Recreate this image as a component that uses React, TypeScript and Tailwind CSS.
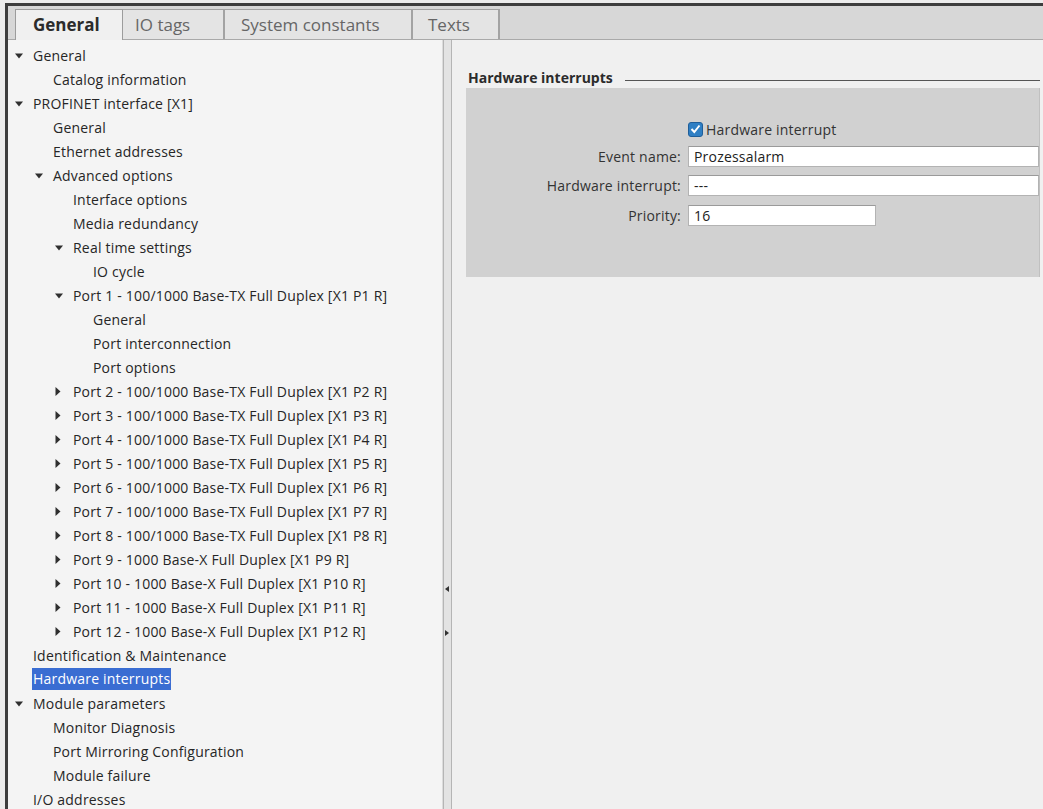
import React from "react";

type TreeRow = {
    label: string;
    level: number;
    arrow?: "down" | "right";
    selected?: boolean;
};

const rows: TreeRow[] = [
    { label: "General", level: 0, arrow: "down" },
    { label: "Catalog information", level: 1 },
    { label: "PROFINET interface [X1]", level: 0, arrow: "down" },
    { label: "General", level: 1 },
    { label: "Ethernet addresses", level: 1 },
    { label: "Advanced options", level: 1, arrow: "down" },
    { label: "Interface options", level: 2 },
    { label: "Media redundancy", level: 2 },
    { label: "Real time settings", level: 2, arrow: "down" },
    { label: "IO cycle", level: 3 },
    { label: "Port 1 - 100/1000 Base-TX Full Duplex [X1 P1 R]", level: 2, arrow: "down" },
    { label: "General", level: 3 },
    { label: "Port interconnection", level: 3 },
    { label: "Port options", level: 3 },
    { label: "Port 2 - 100/1000 Base-TX Full Duplex [X1 P2 R]", level: 2, arrow: "right" },
    { label: "Port 3 - 100/1000 Base-TX Full Duplex [X1 P3 R]", level: 2, arrow: "right" },
    { label: "Port 4 - 100/1000 Base-TX Full Duplex [X1 P4 R]", level: 2, arrow: "right" },
    { label: "Port 5 - 100/1000 Base-TX Full Duplex [X1 P5 R]", level: 2, arrow: "right" },
    { label: "Port 6 - 100/1000 Base-TX Full Duplex [X1 P6 R]", level: 2, arrow: "right" },
    { label: "Port 7 - 100/1000 Base-TX Full Duplex [X1 P7 R]", level: 2, arrow: "right" },
    { label: "Port 8 - 100/1000 Base-TX Full Duplex [X1 P8 R]", level: 2, arrow: "right" },
    { label: "Port 9 - 1000 Base-X Full Duplex [X1 P9 R]", level: 2, arrow: "right" },
    { label: "Port 10 - 1000 Base-X Full Duplex [X1 P10 R]", level: 2, arrow: "right" },
    { label: "Port 11 - 1000 Base-X Full Duplex [X1 P11 R]", level: 2, arrow: "right" },
    { label: "Port 12 - 1000 Base-X Full Duplex [X1 P12 R]", level: 2, arrow: "right" },
    { label: "Identification & Maintenance", level: 0 },
    { label: "Hardware interrupts", level: 0, selected: true },
    { label: "Module parameters", level: 0, arrow: "down" },
    { label: "Monitor Diagnosis", level: 1 },
    { label: "Port Mirroring Configuration", level: 1 },
    { label: "Module failure", level: 1 },
    { label: "I/O addresses", level: 0 },
];

const indent = ["pl-[7px]", "pl-[27px]", "pl-[47px]", "pl-[67px]"];

function Arrow({ dir }: { dir?: "down" | "right" }) {
    if (dir === "down") {
        return (
            <svg width="8" height="6" viewBox="0 0 8 6" className="mt-[1px]">
                <path d="M0 0.5 L8 0.5 L4 5.5 Z" fill="#2f2f2f" />
            </svg>
        );
    }
    if (dir === "right") {
        return (
            <svg width="6" height="9" viewBox="0 0 6 9">
                <path d="M0.5 0 L5.5 4.5 L0.5 9 Z" fill="#2f2f2f" />
            </svg>
        );
    }
    return null;
}

function TreeItem({ label, level, arrow, selected }: TreeRow) {
    return (
        <div className={`h-[24px] flex items-center whitespace-nowrap ${indent[level]}`}>
            <div className="w-[18px] shrink-0 flex items-center">
                <Arrow dir={arrow} />
            </div>
            <span
                className={
                    selected
                        ? "bg-[#3a6dd2] text-white px-[1px] -ml-[1px] leading-[22px]"
                        : "text-[#262626]"
                }
            >
                {label}
            </span>
        </div>
    );
}

function Field({ label, value, short }: { label: string; value: string; short?: boolean }) {
    return (
        <div className="flex items-center h-[21px]">
            <div className="w-[222px] shrink-0 text-right pr-[7px] text-[#333] whitespace-nowrap">{label}</div>
            <div
                className={`h-[21px] bg-white border border-[#b3b3b3] border-t-[#9a9a9a] flex items-center pl-[5px] text-[#222] ${
                    short ? "w-[188px]" : "flex-1"
                }`}
            >
                {value}
            </div>
        </div>
    );
}

export default function App() {
    return (
        <div
            className="w-[1043px] h-[809px] overflow-hidden bg-[#ececec] pt-[3px] pl-[5px] text-[14px] tracking-[0.2px]"
            style={{ fontFamily: '"Open Sans", "Noto Sans", sans-serif' }}
        >
            <div className="h-full flex flex-col border-l-[3px] border-t-[3px] border-[#3d3d3d]">
                {/* tab strip */}
                <div className="h-[34px] shrink-0 bg-[#d7d7d7] pt-[4px] pl-[7px] flex items-end border-b border-[#a9a9a9] tracking-normal">
                    <div className="w-[108px] h-[31px] -mb-[1px] bg-[#f0f0f0] border border-b-0 border-[#9c9c9c] flex items-center pl-[17px] font-bold text-[17px] text-[#2b2b2b]">
                        General
                    </div>
                    <div className="w-[102px] h-[30px] bg-[#e4e4e4] border-r-2 border-t border-[#a3a3a3] flex items-center pl-[12px] text-[17px] text-[#666]">
                        IO tags
                    </div>
                    <div className="w-[188px] h-[30px] bg-[#e4e4e4] border-r-2 border-t border-[#a3a3a3] flex items-center pl-[16px] text-[17px] text-[#666]">
                        System constants
                    </div>
                    <div className="w-[87px] h-[30px] bg-[#e4e4e4] border-r-2 border-t border-[#a3a3a3] flex items-center pl-[15px] text-[17px] text-[#666]">
                        Texts
                    </div>
                </div>

                {/* body */}
                <div className="flex-1 flex min-h-0">
                    {/* tree */}
                    <div className="w-[435px] shrink-0 bg-[#f4f4f4] pt-[3px] border-r border-[#dcdcdc] overflow-hidden">
                        {rows.map((r, i) => (
                            <TreeItem key={i} {...r} />
                        ))}
                    </div>

                    {/* splitter */}
                    <div className="w-[9px] shrink-0 bg-[#e3e3e3] border-x border-[#b5b5b5] relative">
                        <div className="absolute left-[1px] top-[546px]">
                            <svg width="4" height="6" viewBox="0 0 4 6">
                                <path d="M4 0 L0 3 L4 6 Z" fill="#333" />
                            </svg>
                        </div>
                        <div className="absolute left-[1px] top-[590px]">
                            <svg width="4" height="6" viewBox="0 0 4 6">
                                <path d="M0 0 L4 3 L0 6 Z" fill="#333" />
                            </svg>
                        </div>
                    </div>

                    {/* right panel */}
                    <div className="flex-1 bg-[#f0f0f0] pl-[14px] pr-[3px]">
                        <div className="mt-[28px] h-[18px] flex items-center gap-[12px] pl-[2px]">
                            <span className="font-bold text-[#2b2b2b] whitespace-nowrap tracking-normal">Hardware interrupts</span>
                            <div className="flex-1 h-[1px] bg-[#555] mt-[6px]" />
                        </div>
                        <div className="mt-[2px] h-[189px] bg-[#d1d1d1] border-r border-[#c0c0c0] pt-[32px] flex flex-col gap-[8px]">
                            <div className="flex items-center h-[18px]">
                                <div className="w-[222px] shrink-0" />
                                <div className="w-[15px] h-[15px] rounded-[3px] bg-[#2f7fc4] border border-[#1f5e99] flex items-center justify-center">
                                    <svg width="11" height="10" viewBox="0 0 11 10">
                                        <path d="M1.5 5 L4.3 8 L9.5 1.5" stroke="white" strokeWidth="2" fill="none" />
                                    </svg>
                                </div>
                                <span className="ml-[3px] text-[#333]">Hardware interrupt</span>
                            </div>
                            <Field label="Event name:" value="Prozessalarm" />
                            <Field label="Hardware interrupt:" value="---" />
                            <div className="mt-[1px]">
                                <Field label="Priority:" value="16" short />
                            </div>
                        </div>
                    </div>
                </div>
            </div>
        </div>
    );
}
